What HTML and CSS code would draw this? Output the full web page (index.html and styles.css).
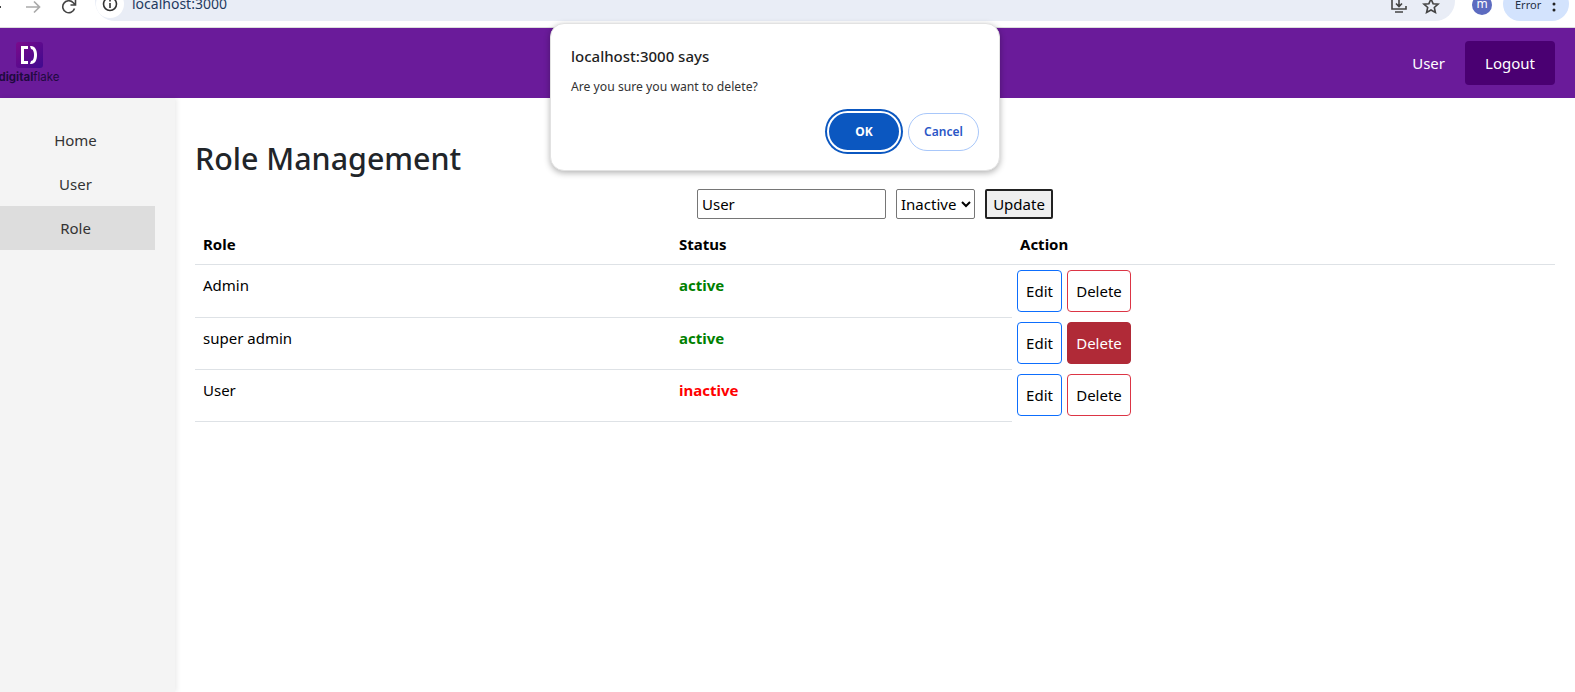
FILE: index.html
```html
<!DOCTYPE html>
<html>
<head>
  <title>Role Management</title>
  <link rel="stylesheet" href="styles.css">
</head>
<body>
  <div class="browser-bar">
    <div class="nav-icons">
      <svg class="nav-icon" width="12" height="14" viewBox="0 0 12 14"><path d="M0 7h8" stroke="#444" stroke-width="2" fill="none"/></svg>
      <svg class="nav-icon" width="16" height="14" viewBox="0 0 16 14"><path d="M1 7h13M9 1.500 14.500 7 9 12.500" stroke="#aaa" stroke-width="1.700" fill="none"/></svg>
      <svg class="nav-icon" width="16" height="16" viewBox="0 0 16 16"><path d="M13.500 9.500A6 6 0 1 1 12 3.500L14 5.500M14.500 1v5h-5" stroke="#444" stroke-width="1.600" fill="none"/></svg>
    </div>
    <div class="url-pill">
      <span class="info-wrap">
        <svg width="16" height="16" viewBox="0 0 16 16"><circle cx="8" cy="8" r="6.500" stroke="#333" stroke-width="1.600" fill="none"/><path d="M8 7v5M8 4v1.600" stroke="#333" stroke-width="1.600"/></svg>
      </span>
      <span class="url-text">localhost:3000</span>
      <span class="url-actions">
        <svg width="18" height="18" viewBox="0 0 18 18"><path d="M9 2H2v10h14V9M5 15h8M9 2v7M6 6.500 9 9.500l3-3" stroke="#444" stroke-width="1.600" fill="none"/></svg>
        <svg width="18" height="18" viewBox="0 0 18 18"><path d="M9 2l2.100 4.700 5 .5-3.800 3.300 1.100 5L9 13l-4.400 2.500 1.100-5L1.900 7.200l5-.5z" stroke="#444" stroke-width="1.600" fill="none"/></svg>
      </span>
    </div>
    <div class="avatar">m</div>
    <div class="error-pill">
      <span>Error</span>
      <svg class="menu-dots" width="4" height="14" viewBox="0 0 4 14"><circle cx="2" cy="2" r="1.500" fill="#222"/><circle cx="2" cy="8" r="1.500" fill="#222"/></svg>
    </div>
  </div>

  <header class="navbar">
    <div class="logo">
      <div class="logo-mark">
        <svg width="18" height="20" viewBox="0 0 18 20"><path d="M8 1H1v18h7v-3H4V4h4z" fill="#fff"/><path d="M10 1h1c4 0 6 4 6 9s-2 9-6 9h-1l1-3c2 0 3-3 3-6s-1-6-3-6z" fill="#fff"/></svg>
      </div>
      <div class="logo-text"><b>digital</b>flake</div>
    </div>
    <div class="nav-right">
      <span class="nav-user">User</span>
      <button class="logout-btn">Logout</button>
    </div>
  </header>

  <div class="layout">
    <aside class="sidebar">
      <a class="side-link">Home</a>
      <a class="side-link">User</a>
      <a class="side-link active">Role</a>
    </aside>
    <main class="content">
      <h1 class="page-title">Role Management</h1>
      <form class="edit-form">
        <input class="edit-input" type="text" value="User">
        <select class="edit-select">
          <option>Inactive</option>
          <option>Active</option>
        </select>
        <button class="update-btn" type="button">Update</button>
      </form>
      <table class="role-table">
        <thead>
          <tr>
            <th class="col-role">Role</th>
            <th class="col-status">Status</th>
            <th>Action</th>
          </tr>
        </thead>
        <tbody>
          <tr class="first-row">
            <td>Admin</td>
            <td class="status-on">active</td>
            <td class="actions"><button class="btn btn-edit">Edit</button><button class="btn btn-delete">Delete</button></td>
          </tr>
          <tr>
            <td>super admin</td>
            <td class="status-on">active</td>
            <td class="actions"><button class="btn btn-edit">Edit</button><button class="btn btn-delete hover">Delete</button></td>
          </tr>
          <tr>
            <td>User</td>
            <td class="status-off">inactive</td>
            <td class="actions"><button class="btn btn-edit">Edit</button><button class="btn btn-delete">Delete</button></td>
          </tr>
        </tbody>
      </table>
    </main>
  </div>

  <div class="dialog">
    <div class="dialog-title">localhost:3000 says</div>
    <div class="dialog-msg">Are you sure you want to delete?</div>
    <div class="dialog-btns">
      <button class="dialog-ok">OK</button>
      <button class="dialog-cancel">Cancel</button>
    </div>
  </div>
</body>
</html>
```

FILE: styles.css
```css
* {
  box-sizing: border-box;
}

html, body {
  height: 100%;
}

body {
  margin: 0;
  overflow: hidden;
  font-family: "Noto Sans", "Open Sans", sans-serif;
  font-size: 15px;
  color: #212529;
  background-color: #fff;
}

/* browser strip, cut off at the top of the shot */
.browser-bar {
  display: flex;
  align-items: flex-end;
  height: 28px;
  padding-bottom: 6px;
  background-color: #fff;
  border-bottom: 1px solid #dcdcdc;
  overflow: hidden;
}

.nav-icons {
  display: flex;
  align-items: center;
  gap: 20px;
  flex: none;
  width: 102px;
  margin-left: -7px;
  margin-bottom: 6px;
}

.url-pill {
  display: flex;
  align-items: flex-end;
  flex: none;
  width: 1360px;
  height: 40px;
  padding: 0 15px 6px 1px;
  background-color: #e9edf6;
  border-radius: 20px;
}

.info-wrap {
  display: flex;
  align-items: center;
  justify-content: center;
  width: 28px;
  height: 28px;
  margin-bottom: -3px;
  background-color: #fff;
  border-radius: 50%;
}

.url-text {
  margin-left: 8px;
  margin-bottom: 1px;
  font-size: 14px;
  line-height: 20px;
  color: #1f3a5f;
}

.url-actions {
  display: flex;
  gap: 14px;
  margin-left: auto;
}

.avatar {
  flex: none;
  width: 20px;
  height: 20px;
  margin-left: 17px;
  margin-bottom: 6px;
  font-size: 12px;
  line-height: 18px;
  text-align: center;
  color: #fff;
  background-color: #5c6bc0;
  border-radius: 50%;
}

.error-pill {
  display: flex;
  align-items: center;
  gap: 11px;
  flex: none;
  width: 66px;
  height: 34px;
  margin-left: 11px;
  padding: 0 0 0 12px;
  font-size: 11px;
  color: #1f2f45;
  background-color: #d3e3fd;
  border-radius: 17px;
}

.menu-dots {
  margin-top: 10px;
}

/* purple bar */
.navbar {
  display: flex;
  align-items: center;
  justify-content: space-between;
  height: 70px;
  padding-right: 20px;
  background-color: #6a1b9a;
}

.logo {
  display: flex;
  flex-direction: column;
  align-items: center;
  width: 58px;
}

.logo-mark {
  display: flex;
  align-items: center;
  justify-content: center;
  width: 27px;
  height: 26px;
  background: linear-gradient(135deg, #7b0a8c, #3f0a8f);
  border-radius: 3px;
}

.logo-text {
  margin-top: 2px;
  font-family: "Inter", sans-serif;
  font-size: 11.5px;
  line-height: 14px;
  white-space: nowrap;
  color: #1f0a3f;
}

.nav-right {
  display: flex;
  align-items: center;
  gap: 20px;
}

.nav-user {
  color: #fff;
}

.logout-btn {
  width: 90px;
  height: 44px;
  font: inherit;
  color: #fff;
  background-color: #4a0072;
  border: none;
  border-radius: 4px;
}

.layout {
  display: flex;
  height: 594px;
}

.sidebar {
  flex: none;
  width: 175px;
  padding-right: 20px;
  padding-top: 20px;
  background-color: #f4f4f4;
  box-shadow: 2px 0 5px rgba(0, 0, 0, 0.08);
}

.side-link {
  display: block;
  height: 44px;
  padding-right: 4px;
  line-height: 44px;
  text-align: center;
  color: #333;
}

.side-link.active {
  background-color: #ddd;
}

.content {
  flex: 1;
  padding: 0 20px;
}

.page-title {
  margin: 37px 0 0;
  font-size: 30.4px;
  font-weight: 500;
  line-height: 48px;
}

.edit-form {
  display: flex;
  justify-content: center;
  gap: 10px;
  height: 30px;
  margin-top: 6px;
}

.edit-input {
  width: 189px;
  height: 30px;
  padding: 1px 4px;
  font: inherit;
  color: #000;
  background: #fff;
  border: 1px solid #767676;
  border-radius: 2px;
}

.edit-select {
  width: 79px;
  height: 30px;
  font: inherit;
  color: #000;
  background: #fff;
  border: 1px solid #767676;
  border-radius: 2px;
}

.update-btn {
  width: 68px;
  height: 30px;
  padding: 0;
  font: inherit;
  color: #000;
  background-color: #efefef;
  border: 2px solid #222;
  border-radius: 2px;
}

.role-table {
  width: 100%;
  margin-top: 4px;
  border-collapse: collapse;
  color: #000;
  table-layout: fixed;
}

.role-table th {
  height: 41px;
  padding: 9px 8px 7px;
  text-align: left;
  font-weight: 700;
  border-bottom: 1px solid #dee2e6;
}

.col-role {
  width: 476px;
}

.col-status {
  width: 341px;
}

.role-table td {
  height: 52px;
  padding: 10px 8px 6px;
  vertical-align: top;
  border-bottom: 1px solid #dee2e6;
}

.role-table .first-row td {
  height: 53px;
}

.role-table td.actions {
  display: flex;
  gap: 5px;
  padding: 4px 0 0 5px;
  border-bottom: none;
}

.role-table .first-row td.actions {
  padding-top: 5px;
}

.status-on {
  font-weight: 700;
  color: green;
}

.status-off {
  font-weight: 700;
  color: red;
}

.btn {
  height: 42px;
  padding: 0 8px;
  font: inherit;
  color: #000;
  background-color: #fff;
  border-radius: 4px;
}

.btn-edit {
  width: 45px;
  border: 1px solid #0d6efd;
}

.btn-delete {
  width: 64px;
  border: 1px solid #dc3545;
}

.btn-delete.hover {
  color: #fff;
  background-color: #b02a37;
  border-color: #b02a37;
}

/* alert box on top of the page */
.dialog {
  position: absolute;
  left: 550px;
  top: 23px;
  width: 450px;
  height: 148px;
  padding: 22px 20px 0;
  background-color: #fff;
  border: 1px solid #e2e2e2;
  border-radius: 14px;
  box-shadow: 0 2px 6px rgba(0, 0, 0, 0.3);
}

.dialog-title {
  font-size: 15px;
  font-weight: 500;
  line-height: 20px;
  color: #1f1f1f;
}

.dialog-msg {
  margin-top: 12px;
  font-size: 12.2px;
  line-height: 18px;
  color: #333;
}

.dialog-btns {
  display: flex;
  align-items: center;
  justify-content: flex-end;
  gap: 7px;
  margin-top: 15px;
}

.dialog-ok {
  width: 74px;
  height: 41px;
  font: inherit;
  font-size: 12px;
  font-weight: 700;
  color: #fff;
  background-color: #0b57c0;
  border: 2px solid #fff;
  border-radius: 21px;
  box-shadow: 0 0 0 2px #0b57c0;
}

.dialog-cancel {
  width: 71px;
  height: 38px;
  font: inherit;
  font-size: 12px;
  font-weight: 600;
  color: #2a56c6;
  background-color: #fff;
  border: 1px solid #a8c7fa;
  border-radius: 19px;
}
```
